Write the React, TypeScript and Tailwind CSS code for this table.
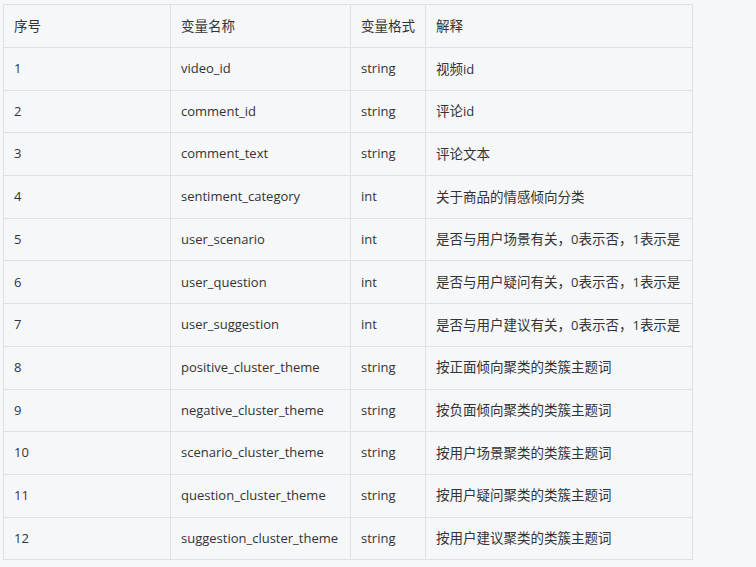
import React from 'react';

type Row = { id: string; name: string; format: string; desc: string };

const rows: Row[] = [
    { id: '1', name: 'video_id', format: 'string', desc: '视频id' },
    { id: '2', name: 'comment_id', format: 'string', desc: '评论id' },
    { id: '3', name: 'comment_text', format: 'string', desc: '评论文本' },
    { id: '4', name: 'sentiment_category', format: 'int', desc: '关于商品的情感倾向分类' },
    { id: '5', name: 'user_scenario', format: 'int', desc: '是否与用户场景有关，0表示否，1表示是' },
    { id: '6', name: 'user_question', format: 'int', desc: '是否与用户疑问有关，0表示否，1表示是' },
    { id: '7', name: 'user_suggestion', format: 'int', desc: '是否与用户建议有关，0表示否，1表示是' },
    { id: '8', name: 'positive_cluster_theme', format: 'string', desc: '按正面倾向聚类的类簇主题词' },
    { id: '9', name: 'negative_cluster_theme', format: 'string', desc: '按负面倾向聚类的类簇主题词' },
    { id: '10', name: 'scenario_cluster_theme', format: 'string', desc: '按用户场景聚类的类簇主题词' },
    { id: '11', name: 'question_cluster_theme', format: 'string', desc: '按用户疑问聚类的类簇主题词' },
    { id: '12', name: 'suggestion_cluster_theme', format: 'string', desc: '按用户建议聚类的类簇主题词' },
];

const headers = ['序号', '变量名称', '变量格式', '解释'];

const cell = 'border border-[#dfe2e5] px-[10px] text-left font-normal align-middle';

// CJK glyphs in the screenshot run a touch wider than the Latin ones
const Mixed: React.FC<{ text: string }> = ({ text }) => (
    <>
        {text.split(/([\u4e00-\u9fff，]+)/).map((part, i) =>
            /[\u4e00-\u9fff，]/.test(part) ? (
                <span key={i} className="text-[13.5px]">{part}</span>
            ) : (
                <span key={i}>{part}</span>
            )
        )}
    </>
);

const App: React.FC = () => {
    return (
        <div
            className="min-h-[567px] bg-[#f6f7f9] pl-[3px] pt-[4px] text-[13px] text-[#333]"
            style={{ fontFamily: '"Open Sans", "Noto Sans CJK SC", sans-serif' }}
        >
            <table className="table-fixed border-collapse">
                <colgroup>
                    <col className="w-[167px]" />
                    <col className="w-[180px]" />
                    <col className="w-[75px]" />
                    <col className="w-[267px]" />
                </colgroup>
                <thead>
                    <tr className="h-[43px]">
                        {headers.map(h => (
                            <th key={h} className={`${cell} whitespace-nowrap`}><Mixed text={h} /></th>
                        ))}
                    </tr>
                </thead>
                <tbody>
                    {rows.map(row => (
                        <tr key={row.id} className="h-[42.7px]">
                            <td className={cell}>{row.id}</td>
                            <td className={cell}>{row.name}</td>
                            <td className={cell}>{row.format}</td>
                            <td className={`${cell} whitespace-nowrap`}><Mixed text={row.desc} /></td>
                        </tr>
                    ))}
                </tbody>
            </table>
        </div>
    );
};

export default App;
